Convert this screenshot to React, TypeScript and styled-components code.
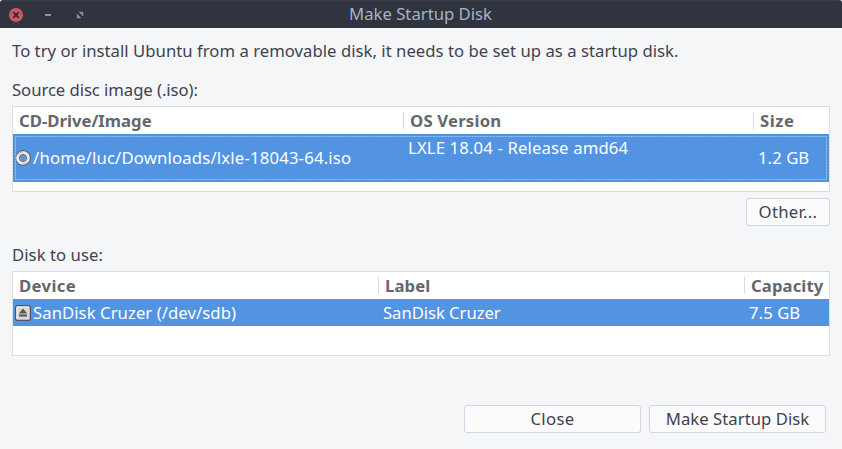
import React from "react";
import styled, { createGlobalStyle } from "styled-components";

const GlobalStyle = createGlobalStyle`
  * { box-sizing: border-box; }
  body { margin: 0; background: #f5f6f8; overflow: hidden; }
`;

const Window = styled.main`
  display: flex;
  flex-direction: column;
  width: 842px;
  height: 449px;
  background: #f5f6f8;
  color: #3e4350;
  font-family: "Noto Sans", "Open Sans", sans-serif;
  font-size: 16.7px;
  line-height: 27px;
  white-space: pre;
`;

const TitleBar = styled.header`
  display: grid;
  grid-template-columns: 100px 1fr 100px;
  height: 28px;
  background: #2f343f;
  border-top: 1px solid #353b4b;
  border-radius: 3px 3px 0 0;
  color: #a9b1c0;
`;

const WindowControls = styled.div`
  display: flex;
  align-items: center;
  gap: 18px;
  height: 27px;
  padding-left: 9px;
`;

const ControlIcon = styled.svg`
  display: block;
  width: 14px;
  height: 14px;
`;

const Title = styled.h1`
  margin: -1px 1px 0 0;
  font: inherit;
  text-align: center;
`;

const Content = styled.section`
  display: flex;
  flex-direction: column;
  flex: 1;
  padding: 9px 12px 0;
`;

const Caption = styled.p<{ $spacing?: number; $gap?: number }>`
  margin: ${(p) => p.$gap ?? 0}px 0 0;
  height: 27px;
  letter-spacing: ${(p) => p.$spacing ?? 0}px;
`;

const Table = styled.div<{ $columns: string; $height: number; $gap: number }>`
  display: grid;
  grid-template-columns: ${(p) => p.$columns};
  grid-auto-rows: max-content;
  height: ${(p) => p.$height}px;
  margin-top: ${(p) => p.$gap}px;
  border: 1px solid #dadee3;
  background: #fff;
`;

const HeaderRow = styled.div`
  display: grid;
  grid-column: 1 / -1;
  grid-template-columns: subgrid;
  height: 27px;
  color: #64676c;
  font-weight: 700;
`;

const HeaderCell = styled.div<{ $spacing?: number }>`
  display: flex;
  align-items: center;
  padding-left: 6px;
  letter-spacing: ${(p) => p.$spacing ?? 0}px;

  &:not(:first-child)::before {
    content: "";
    width: 1px;
    height: 17px;
    margin: 0 6px 0 -7px;
    background: #dadbdd;
  }
`;

const SelectedRow = styled.div<{ $height: number }>`
  position: relative;
  display: grid;
  grid-column: 1 / -1;
  grid-template-columns: subgrid;
  height: ${(p) => p.$height}px;
  background: #5294e2;
  color: #fff;
`;

const FocusRing = styled.svg`
  position: absolute;
  left: 2px;
  top: 2px;
  width: 812px;
  height: 44px;
`;

const Cell = styled.div<{ $top?: boolean; $spacing?: number; $indent?: number }>`
  display: flex;
  align-items: ${(p) => (p.$top ? "flex-start" : "center")};
  height: 27px;
  align-self: ${(p) => (p.$top ? "start" : "center")};
  padding-left: ${(p) => p.$indent ?? 4}px;
  letter-spacing: ${(p) => p.$spacing ?? 0}px;
`;

const TallCell = styled(Cell)`
  height: 47px;
  align-self: start;
`;

const DeviceIcon = styled.svg`
  flex: none;
  width: 16px;
  height: 16px;
  margin-right: 2px;
`;

const Button = styled.button<{ $width: number; $spacing?: number }>`
  display: flex;
  align-items: flex-start;
  justify-content: center;
  width: ${(p) => p.$width}px;
  height: 28px;
  padding: 0;
  border: 1px solid #cfd6e6;
  border-radius: 3px;
  background: #fbfbfc;
  color: #3e4350;
  font: inherit;
  line-height: 25px;
  letter-spacing: ${(p) => p.$spacing ?? 0}px;
`;

const ImageActions = styled.div`
  display: flex;
  justify-content: flex-end;
  margin-top: 6px;
`;

const Footer = styled.footer`
  display: flex;
  justify-content: flex-end;
  gap: 8px;
  margin-top: 49px;
  padding-right: 4px;
`;

export default function App() {
  return (
    <>
      <GlobalStyle />
      <Window>
        <TitleBar>
          <WindowControls>
            <ControlIcon viewBox="0 0 14 14">
              <circle cx="7" cy="7" r="7" fill="#cc575d" />
              <path d="M4.3 4.3l5.4 5.4m0-5.4l-5.4 5.4" stroke="#2f343f" strokeWidth="2" />
            </ControlIcon>
            <ControlIcon viewBox="0 0 14 14">
              <path d="M4 6h6v2H4z" fill="#8b919e" />
            </ControlIcon>
            <ControlIcon viewBox="0 0 14 14">
              <path d="M6 4h4v4zM4 6v4h4z" fill="#8b919e" stroke="#8b919e" strokeWidth=".4" />
            </ControlIcon>
          </WindowControls>
          <Title>Make Startup Disk</Title>
        </TitleBar>
        <Content>
          <Caption $spacing={0.025}>
            To try or install Ubuntu from a removable disk, it needs to be set up as a startup disk.
          </Caption>
          <Caption $gap={12} $spacing={-0.06}>Source disc image (.iso):</Caption>

          <Table $columns="391px 350px 1fr" $height={86} $gap={3}>
            <HeaderRow>
              <HeaderCell>CD-Drive/Image</HeaderCell>
              <HeaderCell $spacing={0.2}>OS Version</HeaderCell>
              <HeaderCell $spacing={0.5}>Size</HeaderCell>
            </HeaderRow>
            <SelectedRow $height={48}>
              <TallCell $indent={2} $spacing={0.18}>
                <DeviceIcon viewBox="0 0 16 16">
                  <circle cx="8" cy="8" r="5.2" fill="none" stroke="#e9e9e5" strokeWidth="4" />
                  <path d="M3 4.5A6 6 0 0 1 8 2M13 11.5A6 6 0 0 1 8 14" fill="none" stroke="#d4c6aa" strokeWidth="1.5" />
                  <circle cx="8" cy="8" r="7.4" fill="none" stroke="#526174" />
                  <circle cx="8" cy="8" r="3.5" fill="#7fa9dc" stroke="#4c6584" />
                  <circle cx="8" cy="8" r="2" fill="#5294e2" stroke="#6f8fb8" strokeWidth=".6" />
                </DeviceIcon>
                /home/luc/Downloads/lxle-18043-64.iso
              </TallCell>
              <Cell $top $spacing={0.14}>LXLE 18.04 - Release amd64</Cell>
              <TallCell $spacing={0.06}>1.2 GB</TallCell>
              <FocusRing viewBox="0 0 812 44">
                <rect x=".5" y=".5" width="811" height="43" fill="none" stroke="#9cc2ef" strokeDasharray="2 1" />
              </FocusRing>
            </SelectedRow>
          </Table>

          <ImageActions>
            <Button $width={84} $spacing={0.3}>Other...</Button>
          </ImageActions>

          <Caption $gap={15} $spacing={0.05}>Disk to use:</Caption>
          <Table $columns="366px 366px 1fr" $height={85} $gap={3}>
            <HeaderRow>
              <HeaderCell $spacing={0.35}>Device</HeaderCell>
              <HeaderCell $spacing={0.1}>Label</HeaderCell>
              <HeaderCell $spacing={0.1}>Capacity</HeaderCell>
            </HeaderRow>
            <SelectedRow $height={27}>
              <Cell $indent={2} $spacing={0.06}>
                <DeviceIcon viewBox="0 0 16 16">
                  <rect x=".6" y=".6" width="14.8" height="14.8" rx="2" fill="#d7d7d5" stroke="#50545a" strokeWidth="1.2" />
                  <path d="M2 14V2h12" fill="none" stroke="#f3f3f2" />
                  <path d="M8 3.5L12.2 8.5H3.8zM4 9.5h8v2H4z" fill="#555753" />
                </DeviceIcon>
                SanDisk Cruzer (/dev/sdb)
              </Cell>
              <Cell $spacing={-0.06}>SanDisk Cruzer</Cell>
              <Cell $spacing={0.06}>7.5 GB</Cell>
            </SelectedRow>
          </Table>

          <Footer>
            <Button $width={177} $spacing={0.35}>Close</Button>
            <Button $width={177} $spacing={0.03}>Make Startup Disk</Button>
          </Footer>
        </Content>
      </Window>
    </>
  );
}
